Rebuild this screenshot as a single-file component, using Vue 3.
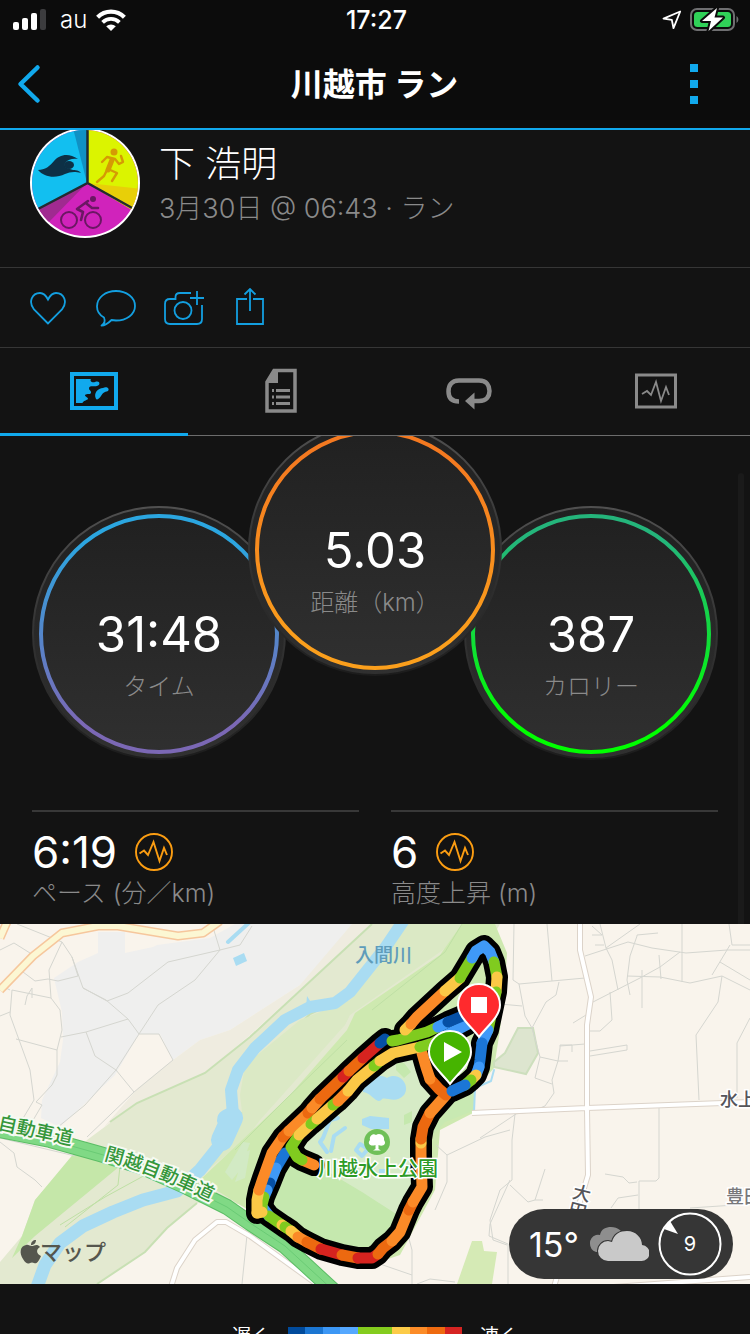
<script setup>
const gauges = [
  { id: 'time', value: '31:48', label: 'タイム', from: '#2ba6e0', to: '#7b68b5' },
  { id: 'distance', value: '5.03', label: '距離（km）', from: '#f47920', to: '#fb9f1c', raised: true },
  { id: 'calories', value: '387', label: 'カロリー', from: '#24b57b', to: '#00ff00' },
]

const stats = [
  { value: '6:19', label: 'ペース (分／km)' },
  { value: '6', label: '高度上昇 (m)' },
]

const legend = ['#014b9c', '#1b76d2', '#3c97f5', '#55a8ff', '#84cc1e', '#84cc1e', '#fccb48', '#fc8c28', '#ee6a10', '#d62422']

const navy = '#064fa5'
const blue = '#1b76d6'
const sky = '#3f99f7'
const green = '#80cb1f'
const yellow = '#fbc846'
const orange = '#fb8a27'
const rust = '#ec6910'
const red = '#d6231f'

// Each strand is a run of coloured stretches; a stretch starts where the previous one ended.
const strands = [
  [
    ['262,1207 269,1216', sky],
    ['282,1225', green],
    ['285,1227', yellow],
    ['291,1231', green],
    ['298,1237', yellow],
    ['307,1242', orange],
    ['321,1249', rust],
    ['342,1255', red],
    ['358,1258', rust],
    ['372,1258 378,1254', red],
    ['383,1248 392,1241', rust],
    ['400,1232 409,1210', orange],
    ['413,1202', rust],
    ['422,1187 421,1155 421,1143', orange],
    ['421,1139', yellow],
    ['423,1127 430,1113', rust],
    ['446,1095', orange],
    ['439,1089 430,1079', rust],
    ['426,1067 422,1053', orange],
  ],
  [
    ['285,1153 276,1168', blue],
    ['270,1183', sky],
    ['267,1190', navy],
    ['264,1197', sky],
    ['262,1205 262,1212', green],
    ['257,1213', yellow],
    ['257,1200 259,1190', yellow],
    ['263,1178 272,1153 283,1137', orange],
    ['289,1131', rust],
    ['308,1113', orange],
    ['312,1108', rust],
    ['320,1099', orange],
    ['343,1077', rust],
    ['349,1071', red],
    ['363,1058', rust],
    ['380,1043', red],
    ['385,1039', navy],
  ],
  [
    ['314,1165 302,1160', orange],
    ['297,1157 291,1147 299,1135', green],
    ['311,1124', yellow],
    ['317,1119', green],
    ['333,1105', yellow],
    ['338,1101', green],
    ['348,1091', orange],
    ['357,1080 374,1066', yellow],
    ['380,1061', green],
    ['393,1053 420,1047', yellow],
    ['433,1043 445,1036', green],
    ['468,1024', sky],
  ],
  [
    ['392,1041 398,1040 427,1032 438,1027', green],
    ['448,1022', sky],
    ['465,1015', navy],
  ],
  [
    ['405,1030 411,1024', yellow],
    ['417,1017 445,991', orange],
    ['460,978', yellow],
    ['466,968 472,958', green],
    ['476,951 484,946 490,952 494,962', sky],
    ['497,977', green],
    ['496,992', yellow],
    ['488,1030', green],
    ['482,1043', sky],
    ['480,1060 479,1067', blue],
    ['476,1075', sky],
    ['471,1080', yellow],
    ['465,1085', green],
    ['452,1091', blue],
  ],
]

const stretches = strands.flatMap((strand) =>
  strand.map(([points, color], i) => {
    const joint = i ? strand[i - 1][0].split(' ').pop() + ' ' : ''
    return { points: joint + points, color }
  }),
)
const casings = strands.map((strand) => strand.map((s) => s[0]).join(' '))
</script>

<template>
  <div class="app">
    <header class="top">
      <div class="status">
        <div class="status-left">
          <svg class="signal" viewBox="0 0 34 22" aria-label="signal">
            <rect x="0" y="13" width="6" height="8" rx="2" fill="#fff" />
            <rect x="9" y="9" width="6" height="12" rx="2" fill="#fff" />
            <rect x="18" y="4" width="6" height="17" rx="2" fill="#fff" />
            <rect x="27" y="0" width="6" height="21" rx="2" fill="#3c3c3e" />
          </svg>
          <span class="carrier">au</span>
          <svg class="wifi" viewBox="0 0 30 22" aria-label="Wi-Fi">
            <g fill="none" stroke="#fff">
              <path d="M1.6 8.2A19 19 0 0 1 28.4 8.2" stroke-width="4.2" />
              <path d="M6.6 13.3A12 12 0 0 1 23.4 13.3" stroke-width="3.8" />
            </g>
            <path d="M15 22L10.2 17.3A7 7 0 0 1 19.8 17.3Z" fill="#fff" />
          </svg>
        </div>
        <time class="clock">17:27</time>
        <div class="status-right">
          <svg class="locate" viewBox="0 0 20 20" aria-label="location">
            <path d="M18.2 1.5L1.5 8.6L9.8 9.8L11.5 18.2Z" fill="none" stroke="#fff" stroke-width="1.8" stroke-linejoin="round" />
          </svg>
          <svg class="battery" viewBox="0 0 50 26" aria-label="battery">
            <rect x="1" y="2" width="43" height="21" rx="6" fill="none" stroke="#6f6f71" stroke-width="2" />
            <path d="M46.5 9C49 10.5 49 14.500 46.500 16Z" fill="#6f6f71" />
            <rect x="4" y="5" width="37" height="15" rx="3.500" fill="#30d158" />
            <path d="M27 1L12 14H21L18.500 24L33 10.500H24.500Z" fill="#fff" stroke="#0c0c0c" stroke-width="4" stroke-linejoin="round" paint-order="stroke" />
          </svg>
        </div>
      </div>
      <nav class="bar">
        <button class="icon-btn back" aria-label="戻る">
          <svg viewBox="0 0 24 40"><path d="M20.500 3.500L3.500 20L20.500 36.500" fill="none" stroke="#11a9ed" stroke-width="4.500" stroke-linecap="round" stroke-linejoin="round" /></svg>
        </button>
        <h1>川越市 ラン</h1>
        <button class="icon-btn more" aria-label="メニュー">
          <svg viewBox="0 0 8 40"><path d="M0 0H8V8H0ZM0 16H8V24H0ZM0 32H8V40H0Z" fill="#11a9ed" /></svg>
        </button>
      </nav>
    </header>

    <section class="profile">
      <svg class="avatar" viewBox="0 0 110 110" aria-label="avatar">
        <defs><clipPath id="face"><circle cx="55" cy="55" r="53" /></clipPath></defs>
        <circle cx="55" cy="55" r="55" fill="#fff" />
        <g clip-path="url(#face)">
          <rect width="110" height="110" fill="#d023bb" />
          <path d="M57 55L8 81L-10 60V-5H57Z" fill="#12bff0" />
          <path d="M57 55L43 0H57Z" fill="#1091c4" />
          <path d="M57 55V0H112V88Z" fill="#dbf400" />
          <path d="M57 55L112 61V88Z" fill="#e8cf08" />
          <path d="M57 55L8 81L18 95Z" fill="#a02a90" />
          <path d="M57.500 0V55L8 81M57.500 55L104 81" fill="none" stroke="#222b30" stroke-width="2.500" />
          <path d="M8 42C15 42 20 38 24 33C29 27 38 24 48 31C42 30 38 32 36 34C33 37 35 40 40 41C44 43 48 41 51 45C44 43 40 44 35 46C25 51 14 49 8 42Z" fill="#0d3046" />
          <ellipse cx="39" cy="37" rx="5" ry="4" fill="#0d3046" />
          <g fill="none" stroke="#d59a04" stroke-linecap="round" stroke-linejoin="round">
            <path d="M72 34L77 29L85 31L89 36L93 34L91 28" stroke-width="2.400" />
            <path d="M82 32L78 42" stroke-width="5" />
            <path d="M77 42L74 48L67 54" stroke-width="2.400" />
            <path d="M78 41L87 45L82 53" stroke-width="2.400" />
          </g>
          <circle cx="84" cy="24" r="3.500" fill="#d59a04" />
          <g fill="none" stroke="#6b1763" stroke-linecap="round" stroke-linejoin="round">
            <circle cx="39" cy="92" r="8" stroke-width="2" />
            <circle cx="63" cy="92" r="8" stroke-width="2" />
            <path d="M58 73L47 81L53 84L51 92M57 76L62 80H68" stroke-width="2.600" />
          </g>
          <circle cx="63" cy="71" r="3" fill="#6b1763" />
        </g>
      </svg>
      <div class="who">
        <h2>下 浩明</h2>
        <p>3月30日 @ 06:43 · ラン</p>
      </div>
    </section>

    <section class="actions">
      <button class="icon-btn" aria-label="いいね">
        <svg width="36" height="40" viewBox="0 0 36 40"><path d="M18 35.500L4 21.500C-2 14 2 5 10 5C14.500 5 16.500 8.500 18 11.500C19.500 8.500 21.500 5 26 5C34 5 38 14 32 21.500Z" fill="none" stroke="#139fe0" stroke-width="1.800" /></svg>
      </button>
      <button class="icon-btn" aria-label="コメント">
        <svg width="40" height="40" viewBox="0 0 40 40"><path d="M5.500 37.500C9 35.500 9 32 8 29.500C3.500 27 1 23 1 18.500C1 9.500 9.500 3 20 3S39 9.500 39 18S30.500 32.500 20 32.500L15.500 32C12 35.500 9 37.500 5.500 37.500Z" fill="none" stroke="#139fe0" stroke-width="1.800" stroke-linejoin="round" /></svg>
      </button>
      <button class="icon-btn" aria-label="写真を追加">
        <svg width="40" height="40" viewBox="2 2 40 40"><g fill="none" stroke="#139fe0" stroke-width="1.800"><path d="M29 7H18C15 7 13.500 8.500 13.500 11V13H8C5 13 3 15 3 18V33C3 36 5 38 8 38H35C38 38 40 36 40 33V19" /><circle cx="21" cy="24.500" r="8.500" /><path d="M35 5V19M28 12H42" /></g></svg>
      </button>
      <button class="icon-btn" aria-label="共有">
        <svg width="28" height="40" viewBox="0 1 28 40"><g fill="none" stroke="#139fe0" stroke-width="1.800"><path d="M11 12H1V37H27V12H17M14 2V24M8.500 7.500L14 2L19.500 7.500" /></g></svg>
      </button>
    </section>

    <nav class="tabs">
      <button class="tab active" aria-label="地図">
        <svg width="48" height="46" viewBox="0 0 48 46">
          <rect x="2" y="6" width="44" height="34" fill="none" stroke="#11a9ed" stroke-width="4" />
          <path d="M6 11H21C19.500 13 22 15 25 14C30 12 31 17 27 18C24 19 20 17 19 20C19 23 21.500 22 21 25C20 27 17 25 15 27C15 29 18 29 18 31C17 32 13 33 12.500 35H6Z" fill="#11a9ed" />
          <path d="M26 31C23 25 28 20 33 20C37 18 40 21 38 23C34 24 33 25 31 28C29 31 27 32 26 31Z" fill="#11a9ed" />
        </svg>
      </button>
      <button class="tab" aria-label="詳細">
        <svg width="34" height="46" viewBox="0 0 34 46">
          <path d="M10 2.500H31V43H3V14Z" fill="none" stroke="#8a8a8a" stroke-width="3.500" />
          <path d="M10 2.500H14V15H3V12Z" fill="#8a8a8a" />
          <path d="M8 21H10V24H8ZM12 21H26V24H12ZM8 27.500H10V30.500H8ZM12 27.500H26V30.500H12ZM8 34H10V37H8ZM12 34H26V37H12Z" fill="#8a8a8a" />
        </svg>
      </button>
      <button class="tab" aria-label="ラップ">
        <svg width="46" height="46" viewBox="0 0 46 46">
          <path d="M13 33.500C5 33.500 2.500 29 2.500 23.500S5 12.500 13 12.500H33C41 12.500 43.500 18 43.500 23S41 33 33 33H27" fill="none" stroke="#8a8a8a" stroke-width="4.500" />
          <path d="M19 33L28.500 24.500V41.500Z" fill="#8a8a8a" />
        </svg>
      </button>
      <button class="tab" aria-label="グラフ">
        <svg width="42" height="46" viewBox="0 0 42 46">
          <rect x="1.500" y="7" width="39" height="32" fill="none" stroke="#8a8a8a" stroke-width="3" />
          <path d="M7 26L12 23L16 27L21 14L26 33L31 19L34 27" fill="none" stroke="#8a8a8a" stroke-width="1.800" />
        </svg>
      </button>
    </nav>

    <main class="content">
      <section class="gauges">
        <div v-for="g in gauges" :key="g.id" class="gauge" :class="{ raised: g.raised }">
          <svg class="dial" viewBox="0 0 254 254" aria-hidden="true">
            <defs>
              <linearGradient :id="'ring-' + g.id" x1="0" y1="0" x2="0" y2="1">
                <stop offset="0.100" :stop-color="g.from" />
                <stop offset="0.880" :stop-color="g.to" />
              </linearGradient>
              <linearGradient :id="'fill-' + g.id" x1="0" y1="0" x2="0" y2="1">
                <stop offset="0" stop-color="#202020" />
                <stop offset="1" stop-color="#303030" />
              </linearGradient>
              <linearGradient :id="'rim-' + g.id" x1="0" y1="0" x2="0" y2="1">
                <stop offset="0" stop-color="#505050" />
                <stop offset="0.500" stop-color="#333" />
                <stop offset="0.800" stop-color="#292929" />
                <stop offset="1" stop-color="#1c1c1c" />
              </linearGradient>
            </defs>
            <circle cx="127" cy="127" r="126" :fill="'url(#fill-' + g.id + ')'" :stroke="'url(#rim-' + g.id + ')'" stroke-width="2" />
            <circle cx="127" cy="128" r="118" fill="none" :stroke="'url(#ring-' + g.id + ')'" stroke-width="4" />
          </svg>
          <strong>{{ g.value }}</strong>
          <span>{{ g.label }}</span>
        </div>
      </section>

      <section class="stats">
        <div v-for="s in stats" :key="s.label" class="stat">
          <div class="stat-value">
            <strong>{{ s.value }}</strong>
            <button class="icon-btn" :aria-label="s.label + ' グラフ'">
              <svg width="38" height="38" viewBox="0 0 38 38"><circle cx="19" cy="19" r="18" fill="none" stroke="#fb9d12" stroke-width="1.900" /><path d="M4.500 20.500L9 17.500L13 22L18.500 9L24.500 28L29 15L32 22" fill="none" stroke="#fb9d12" stroke-width="1.900" /></svg>
            </button>
          </div>
          <span>{{ s.label }}</span>
        </div>
      </section>
      <i class="scroll-track"></i>
    </main>

    <section class="map">
      <svg class="map-art" viewBox="0 924 750 360" role="img" aria-label="ルートマップ">
        <rect y="924" width="750" height="360" fill="#f9f4ec" />
        <path d="M98 932V953L78 962L54 978L62 1012L63 1040L60 1062L42 1100L41 1118L60 1127L115 1075L139 1034H160L173 1060L200 1040L230 1030L300 985L345 938L352 924H235L210 938L157 945L153 947L125 953V932Z" fill="#efefee" />
        <path d="M352 924H372L250 1035L205 1073L137 1103L104 1127L138 1088L173 1060L200 1040L230 1030L300 985Z" fill="#efece0" />
        <path d="M372 924L250 1037L205 1073L137 1103L87 1140L35 1200L22 1236L0 1262V1284H97L145 1252L167 1228L197 1203L270 1205L400 1100L500 924Z" fill="#e3e9d0" />
        <path d="M372 924L250 1037L205 1073L137 1103L110 1122M97 1284L145 1252L167 1228L197 1203M420 924L350 995L310 1014L265 1062L252 1098L205 1170" fill="none" stroke="#c8e0b4" stroke-width="2" />
        <path d="M408 924L350 1000L300 1020L245 1065L240 1095L243 1120L205 1172L245 1140L260 1120L345 1025L350 1015L450 945L462 924Z" fill="#dbe9c5" />
        <path d="M462 924H495L507 953L505 985L500 1030L494 1068L475 1090V1112L440 1130L435 1190L400 1255L370 1265L330 1255L240 1205L200 1180L290 1095L347 1030L355 1013L440 955Z" fill="#cee9b0" />
        <path d="M75 1152L120 1166L35 1236L12 1258L22 1236L35 1200Z" fill="#c5e7a9" />
        <path d="M285 1130L350 1075L430 1045L445 1090L425 1120L420 1188L396 1214L325 1170L300 1165Z" fill="#d6ebc6" />
        <path d="M284 1157L301 1163L325 1170L362 1192L396 1214L388 1238L370 1255L330 1248L268 1206Z" fill="#c5e8ae" />
        <path d="M435 1065L475 1085V1110L445 1122L428 1140L432 1112L450 1090Z" fill="#c8e9b2" />
        <path d="M396 1062L404 1063L411 1072L404 1078L396 1070ZM404 1115L412 1111V1122L404 1125Z" fill="#c5e8ae" />
        <path d="M225 1172L243 1142L250 1143L240 1170L232 1180ZM245 1152L250 1150L245 1178L235 1182Z" fill="#d2eac4" />
        <path d="M235 1150L285 1100L347 1040M372 1010L445 952L462 924M160 1167L105 1197L60 1225M120 1166L118 1185L65 1227" fill="none" stroke="#bfe0a5" stroke-width="1" />
        <g fill="none" stroke="#a9dcf2" stroke-linecap="round" stroke-linejoin="round">
          <path d="M404 920L385 948L350 992L335 1003L310 1007L285 1020L255 1048L238 1070L231 1090L233 1115" stroke-width="12" />
          <path d="M228 1120L232 1118L222 1140" stroke-width="22" />
          <path d="M220 1145L200 1170L177 1191L143 1200L113 1212L83 1226L60 1243L45 1265L36 1290" stroke-width="13" />
          <path d="M228 942L252 920" stroke-width="4" />
          <path d="M338 1118L330 1120L323 1138L320 1142L327 1152M345 1128L334 1136L331 1151M360 1144L368 1149L362 1156L356 1150Z" stroke-width="4" />
          <path d="M494 1070L491 1081L475 1088L474 1112" stroke-width="2" />
        </g>
        <path d="M233 958L244 953L247 961L236 966ZM362 1119L370 1116L389 1118V1129H371L362 1125ZM363 1085C370 1073 384 1075 387 1078C399 1071 411 1085 404 1095C396 1104 387 1097 382 1099C377 1106 371 1092 363 1092ZM379 1169H386V1173H379ZM306 1007L307 996L312 1004Z" fill="#a9dcf2" />
        <path d="M518 1028H533L538 1053L526 1074L494 1067V1062L505 1053Z" fill="#dde5cf" stroke="#cddfbd" stroke-width="2" />
        <path d="M472 1241L482 1241L484 1251L497 1252L492 1284H457Z" fill="#d5eab5" />

        <g fill="none" stroke="#d5d6d0" stroke-width="1">
          <path d="M62 942L72 957L83 988L107 1001L128 993L168 962L220 950L212 924M49 970L62 942M72 957L78 976L58 981L48 979L35 981L23 972M49 970L51 998L12 990L10 1015L30 1070L34 1100L22 1120M51 998L60 1010L62 1030L57 1050V1075L52 1085L36 1102L42 1105L32 1122M16 1039L57 1050M61 1037L86 1032L128 1019L106 1000M86 1032L95 1056L116 1070L134 1092M220 950L195 980L158 1005L139 1034L116 1070L85 1105L58 1127M139 1034H159L173 1060L134 1092L87 1137M128 1019L139 1034M106 1000L83 988" />
          <path d="M220 950L240 945L252 926M10 990L0 985M0 1142L14 1153L17 1167L35 1180L42 1187M17 924L62 942M0 950L14 943L30 953M0 1016L10 1012M25 1005L27 996L32 988V998M0 1138L75 1156M247 1235L242 1284" />
          <path d="M514 924L513 980L519 984L585 978M547 924L552 981M519 984L525 1016L532 1028L546 1002L556 995L559 982M500 1004L522 1006M532 1028L540 1057L558 1061H568M558 1061L560 1048V1045H572V1052M558 1061L552 1080L554 1093L545 1106L530 1112L515 1114L512 1140V1180L500 1190L490 1220L493 1240L507 1245M516 1114L480 1138M540 1057L535 1078L552 1084M545 1169L535 1200L528 1202L510 1185M535 1200L543 1200M585 1044L560 1046" />
          <path d="M585 956L628 942L652 948L686 953L727 950H750M593 1002L640 978L660 967L680 952M606 948L612 960L618 990M600 924L606 948L640 924M637 936L630 956L627 980L630 995M637 936V935L658 933M627 976L660 977L690 983L722 976L750 990M682 924V952L682 982M659 955L661 979M729 924L732 945H750M712 975L730 945M720 962L750 980M642 970V1008M595 945H604M592 926L602 935H592M610 992L612 1020L600 1031H590M722 976L718 1002L696 1035L699 1100M750 1018L737 1043V1098M590 1051L627 1045V1050L590 1056" />
          <path d="M659 1105V1178L656 1181H639V1212M605 1174L623 1177L629 1183L637 1182M611 1208L618 1198L638 1195M690 1208L750 1204M573 1023L586 1015" />
          <path d="M436 1145L447 1155V1182L435 1210M447 1155L485 1137L510 1130M408 1235L412 1250V1284M412 1275L380 1264M510 1180L490 1224L489 1236L508 1244V1284M417 1284L430 1279L455 1282" />
        </g>

        <g fill="none" stroke-linejoin="round">
          <path d="M0 990L33 956L62 933L98 926H118L178 936L203 933L220 921M0 938L7 922" stroke="#f6c79d" stroke-width="9" />
          <path d="M0 990L33 956L62 933L98 926H118L178 936L203 933L220 921M0 938L7 922" stroke="#fcf7d3" stroke-width="6" />
          <path d="M580 920V950L591 997L587 1025V1110L588 1175L582 1195L553 1290M472 1113L587 1108L750 1102M170 1290L177 1268L195 1240L217 1222H226L250 1236L325 1290" stroke="#dcd3c9" stroke-width="6" />
          <path d="M580 920V950L591 997L587 1025V1110L588 1175L582 1195L553 1290M472 1113L587 1108L750 1102M170 1290L177 1268L195 1240L217 1222H226L250 1236L325 1290" stroke="#fff" stroke-width="4" />
          <path d="M600 1288L750 1277" stroke="#dcd3c9" stroke-width="6" />
          <path d="M600 1288L750 1277" stroke="#fff" stroke-width="4" />
          <path d="M-5 1129L50 1140L100 1154L140 1166L187 1187L227 1207L250 1223L285 1246L335 1292" stroke="#5bbd65" stroke-width="16" />
          <path d="M-5 1129L50 1140L100 1154L140 1166L187 1187L227 1207L250 1223L285 1246L335 1292" stroke="#80d985" stroke-width="14" />
          <path d="M-5 1129L50 1140L100 1154L140 1166L187 1187L227 1207L250 1223L285 1246L335 1292" stroke="#6acb75" stroke-width="1" />
        </g>

        <defs>
          <path id="road-a" d="M-3 1129L120 1156" />
          <path id="road-b" d="M104 1160Q164 1176 240 1217" />
        </defs>
        <g class="road-label">
          <text><textPath href="#road-a">自動車道</textPath></text>
          <text><textPath href="#road-b">関越自動車道</textPath></text>
        </g>
        <text class="river-label" x="355" y="962">入間川</text>
        <text class="street-label" x="720" y="1106">水上</text>
        <text class="street-label place" x="726" y="1203">豊田</text>
        <g class="street-label" transform="rotate(14 582 1193)">
          <text x="573" y="1200">大</text>
          <text x="573" y="1218">田</text>
        </g>

        <g fill="none" stroke="#000" stroke-width="22" stroke-linecap="round" stroke-linejoin="round">
          <polyline v-for="(c, i) in casings" :key="i" :points="c" />
        </g>
        <g fill="none" stroke-width="11" stroke-linecap="round" stroke-linejoin="round">
          <polyline v-for="(s, i) in stretches" :key="i" :points="s.points" :stroke="s.color" />
        </g>

        <circle cx="377" cy="1142" r="13" fill="#6fc058" />
        <path d="M375.500 1149V1145C370 1147 367 1143 370 1140C369 1136 373 1133 376 1135C380 1132 385 1136 384 1140C387 1144 383 1147 378.500 1145V1149L381 1150.500H373Z" fill="#fff" />
        <text class="park-label" x="318" y="1176">川越水上公園</text>

        <g stroke="#fff" stroke-width="2">
          <path d="M479 1037C472 1027 458 1017 458 1005A21 21 0 0 1 500 1005C500 1017 486 1027 479 1037Z" fill="#ff2a2d" />
          <path d="M450 1084C443 1074 429 1064 429 1052A21 21 0 0 1 471 1052C471 1064 457 1074 450 1084Z" fill="#46b400" />
        </g>
        <path d="M471 997H487V1013H471ZM444 1042L462 1052L444 1062Z" fill="#fff" />

        <g fill="#55564e">
          <path d="M32 1246C30 1246 28 1244 26 1245C20 1246 19 1253 23 1259C26 1264 28 1264 30 1263Q32 1262 34 1263C36 1264 38 1263 41 1256C36 1254 36 1249 40 1247C37 1243 34 1246 32 1246ZM31 1245C31 1242 33 1240 36 1240C36 1243 34 1245 31 1245Z" />
          <text class="brand" x="40" y="1260">マップ</text>
        </g>
      </svg>

      <div class="weather">
        <span class="temp">15°</span>
        <svg class="clouds" viewBox="0 0 62 36" aria-label="曇り">
          <path d="M9 26A9 9 0 0 1 9 9A8 8 0 0 1 13 9C14 3 19 1 24 1C31 1 36 5 38 12L20 26Z" fill="#8e8e8e" />
          <path d="M21 35A9.500 9.500 0 0 1 21 15L25 16C27 8 33 5 40 5C49 5 55 12 55 19A8 8 0 0 1 54 35Z" fill="#c9c9c9" stroke="#363636" stroke-width="2" paint-order="stroke" />
        </svg>
        <div class="wind">
          <svg viewBox="0 0 64 64" aria-hidden="true"><circle cx="32" cy="32" r="30.500" fill="none" stroke="#fff" stroke-width="2" /><path d="M6 17L12 9L20 22Z" fill="#fff" /></svg>
          <span>9</span>
        </div>
      </div>
    </section>

    <section class="legend">
      <span>遅く</span>
      <div class="scale"><i v-for="(c, i) in legend" :key="i" :style="{ background: c }"></i></div>
      <span>速く</span>
    </section>
  </div>
</template>

<style>
body {
  background: #131313;
}
</style>

<style scoped>
.app {
  height: 100vh;
  overflow: hidden;
  background: #131313;
  color: #fff;
  font-family: Inter, "Noto Sans CJK JP", sans-serif;
}
svg {
  display: block;
  flex: none;
}
h1, h2, p {
  margin: 0;
}
strong {
  font-weight: 400;
}
.icon-btn {
  display: flex;
  padding: 0;
  border: 0;
  background: none;
}
.top {
  background: #0c0c0c;
  border-bottom: 2px solid #11a9ed;
}
.status {
  display: grid;
  grid-template-columns: 1fr auto 1fr;
  align-items: center;
  height: 40px;
  padding: 0 10px 0 13px;
}
.status-left, .status-right {
  display: flex;
  align-items: center;
}
.status-right {
  justify-content: flex-end;
  gap: 8px;
}
.signal {
  width: 34px;
  height: 22px;
}
.carrier {
  margin: 0 9px 0 13px;
  font-size: 24px;
  line-height: 40px;
  font-weight: 300;
}
.wifi {
  width: 30px;
  height: 22px;
}
.clock {
  font-size: 25px;
  line-height: 40px;
  font-weight: 500;
}
.locate {
  width: 20px;
  height: 20px;
}
.battery {
  width: 50px;
  height: 26px;
}
.bar {
  display: grid;
  grid-template-columns: 1fr auto 1fr;
  align-items: center;
  height: 88px;
  padding: 0 52px 0 17px;
}
.back svg {
  width: 24px;
  height: 40px;
}
.bar h1 {
  padding: 2px 0 0 34px;
  font-size: 32px;
  line-height: 40px;
  font-weight: 700;
}
.more {
  justify-self: end;
}
.more svg {
  width: 8px;
  height: 40px;
}
.profile {
  display: flex;
  gap: 19px;
  height: 137px;
  padding: 0 30px;
  overflow: hidden;
  border-bottom: 1px solid #363636;
}
.avatar {
  width: 110px;
  height: 110px;
  margin-top: -2px;
}
.who {
  padding-top: 10px;
}
.who h2 {
  font-size: 36px;
  line-height: 48px;
  font-weight: 300;
}
.who p {
  color: #8a8a8a;
  font-size: 27px;
  line-height: 42px;
  font-weight: 300;
}
.actions {
  display: flex;
  align-items: center;
  gap: 30px;
  height: 79px;
  padding: 0 30px;
  border-bottom: 1px solid #363636;
}
.actions .icon-btn:nth-child(3) {
  margin: 0 2px 0 -2px;
}
.tabs {
  display: grid;
  grid-template-columns: repeat(4, 1fr);
  height: 87px;
  border-bottom: 1px solid #6c6c6c;
}
.tab {
  display: flex;
  align-items: center;
  justify-content: center;
  height: 88px;
  padding: 0;
  border: 0;
  border-bottom: 3px solid transparent;
  background: none;
}
.tab.active {
  border-bottom-color: #11a9ed;
}
.content {
  position: relative;
  overflow: hidden;
}
.gauges {
  display: flex;
  justify-content: center;
  padding-bottom: 50px;
}
.gauge {
  position: relative;
  z-index: 0;
  display: flex;
  flex: none;
  flex-direction: column;
  align-items: center;
  box-sizing: border-box;
  width: 254px;
  height: 254px;
  margin: 70px -19px 0;
  padding-top: 100px;
}
.gauge.raised {
  z-index: 1;
  margin-top: -14px;
}
.gauge .dial {
  position: absolute;
  inset: 0;
  z-index: -1;
  width: 100%;
  height: 100%;
}
.gauge strong {
  font-size: 49px;
  line-height: 58px;
}
.gauge span {
  margin-top: 6px;
  color: #8a8a8a;
  font-size: 24px;
  line-height: 34px;
  font-weight: 300;
}
.stats {
  display: grid;
  grid-template-columns: 1fr 1fr;
  gap: 32px;
  padding: 0 32px;
}
.stat {
  height: 112px;
  border-top: 2px solid #383838;
}
.stat-value {
  display: flex;
  align-items: center;
  gap: 18px;
  height: 44px;
  margin-top: 18px;
}
.stat-value strong {
  font-size: 44px;
  line-height: 44px;
}
.stat span {
  display: block;
  color: #8a8a8a;
  font-size: 25px;
  line-height: 38px;
  font-weight: 300;
}
.scroll-track {
  position: absolute;
  top: 37px;
  right: 6px;
  bottom: 0;
  width: 6px;
  border-radius: 3px 3px 0 0;
  background: #1a1a1a;
}
.map {
  position: relative;
}
.map-art {
  width: 100%;
}
.map-art text {
  font-family: "Noto Sans CJK JP", sans-serif;
}
.road-label {
  fill: #35973b;
  stroke: #f6faf2;
  stroke-width: 4px;
  paint-order: stroke;
  font-size: 19px;
  font-weight: 500;
}
.river-label {
  fill: #5f9cba;
  font-size: 19px;
  font-weight: 500;
}
.street-label {
  fill: #55555a;
  stroke: #fff;
  stroke-width: 3px;
  paint-order: stroke;
  font-size: 18px;
  font-weight: 500;
}
.place {
  fill: #77777a;
}
.park-label {
  fill: #2e9b26;
  stroke: #fff;
  stroke-width: 3px;
  paint-order: stroke;
  font-size: 20px;
  font-weight: 500;
}
.brand {
  font-size: 22px;
  font-weight: 500;
}
.weather {
  position: absolute;
  right: 17px;
  bottom: 5px;
  display: flex;
  align-items: center;
  box-sizing: border-box;
  width: 224px;
  height: 70px;
  padding: 0 11px 0 20px;
  border-radius: 35px;
  background: #363636;
}
.temp {
  font-size: 34px;
}
.clouds {
  width: 62px;
  height: 36px;
  margin: 0 auto 0 8px;
}
.wind {
  position: relative;
  display: grid;
  place-items: center;
  width: 64px;
  height: 64px;
}
.wind svg {
  position: absolute;
  inset: 0;
}
.wind span {
  font-size: 20px;
}
.legend {
  display: flex;
  justify-content: center;
  gap: 18px;
  padding-top: 38px;
}
.legend span {
  font-size: 19px;
  line-height: 29px;
  font-weight: 400;
}
.scale {
  display: grid;
  grid-template-columns: repeat(10, 1fr);
  width: 174px;
  height: 16px;
  margin-top: 5px;
}
</style>
